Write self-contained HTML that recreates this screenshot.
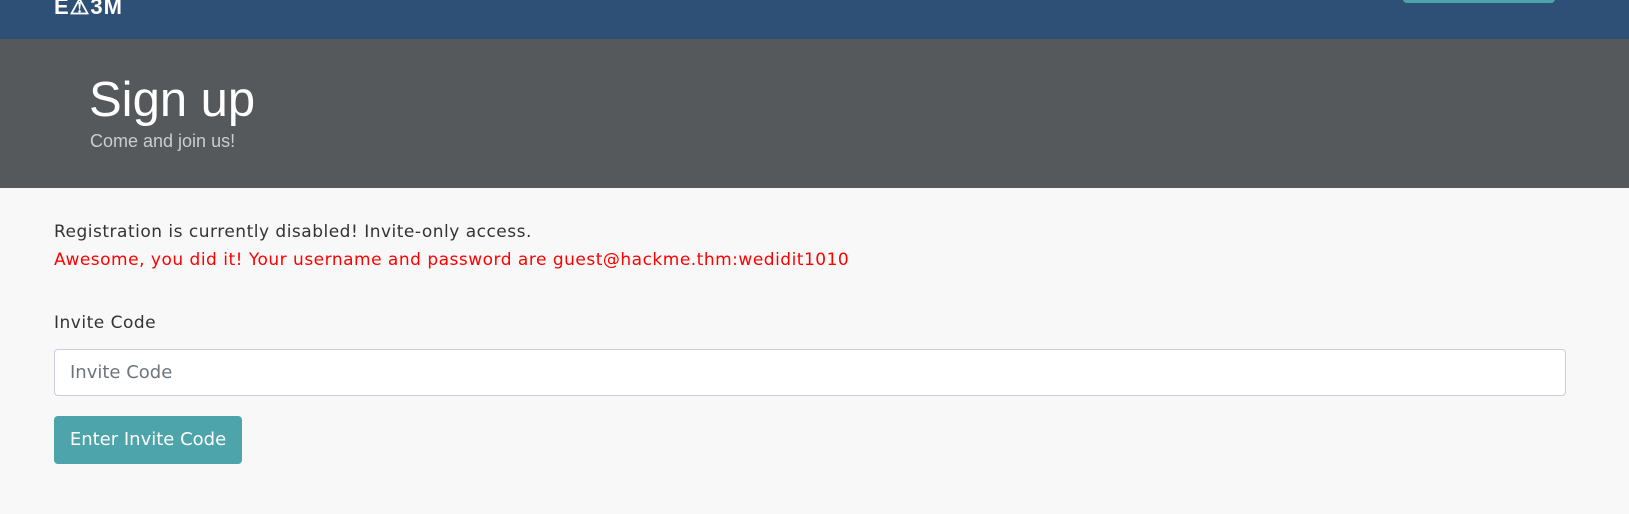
<!DOCTYPE html>
<html><head><style>
body{margin:0;width:1629px;height:514px;overflow:hidden;background:#f8f8f8;font-family:"Liberation Sans",sans-serif;position:relative}
.nav{position:absolute;left:0;top:0;width:1629px;height:39px;background:#2e5076}
.nbtn{position:absolute;left:1403px;top:-10px;width:152px;height:13px;background:#4da4ab;border-radius:4px}
.logo{position:absolute;left:54px;top:-6px;color:#fff;font-weight:bold;font-size:22px;letter-spacing:1px}
.band{position:absolute;left:0;top:39px;width:1629px;height:149px;background:#55595c}
h1{position:absolute;left:89px;top:33px;margin:0;font-size:49px;font-weight:normal;color:#fff;line-height:56px}
.sub{position:absolute;left:90px;top:92px;font-size:18px;color:#ccc}
.t{position:absolute;left:54px;font-size:17px;color:#333;font-family:"DejaVu Sans",sans-serif;letter-spacing:0.5px}
.red{color:#f00}
.inp{position:absolute;left:54px;top:349px;width:1510px;height:45px;background:#fff;border:1px solid #ccd;border-radius:4px}
.inp span{position:absolute;left:15px;top:12px;font-size:18px;color:#6c757d;font-family:"DejaVu Sans",sans-serif}
.btn{position:absolute;left:54px;top:416px;width:188px;height:48px;background:#4da4ab;border-radius:4px;color:#fff;font-size:18px;line-height:48px;text-align:center;font-family:"DejaVu Sans",sans-serif}
</style></head><body>
<div class="nav"><div class="logo">E⚠3M</div><div class="nbtn"></div></div>
<div class="band"><h1>Sign up</h1><div class="sub">Come and join us!</div></div>
<div class="t" style="top:222px">Registration is currently disabled! Invite-only access.</div>
<div class="t red" style="top:250px">Awesome, you did it! Your username and password are guest@hackme.thm:wedidit1010</div>
<div class="t" style="top:313px">Invite Code</div>
<div class="inp"><span>Invite Code</span></div>
<div class="btn">Enter Invite Code</div>
</body></html>
